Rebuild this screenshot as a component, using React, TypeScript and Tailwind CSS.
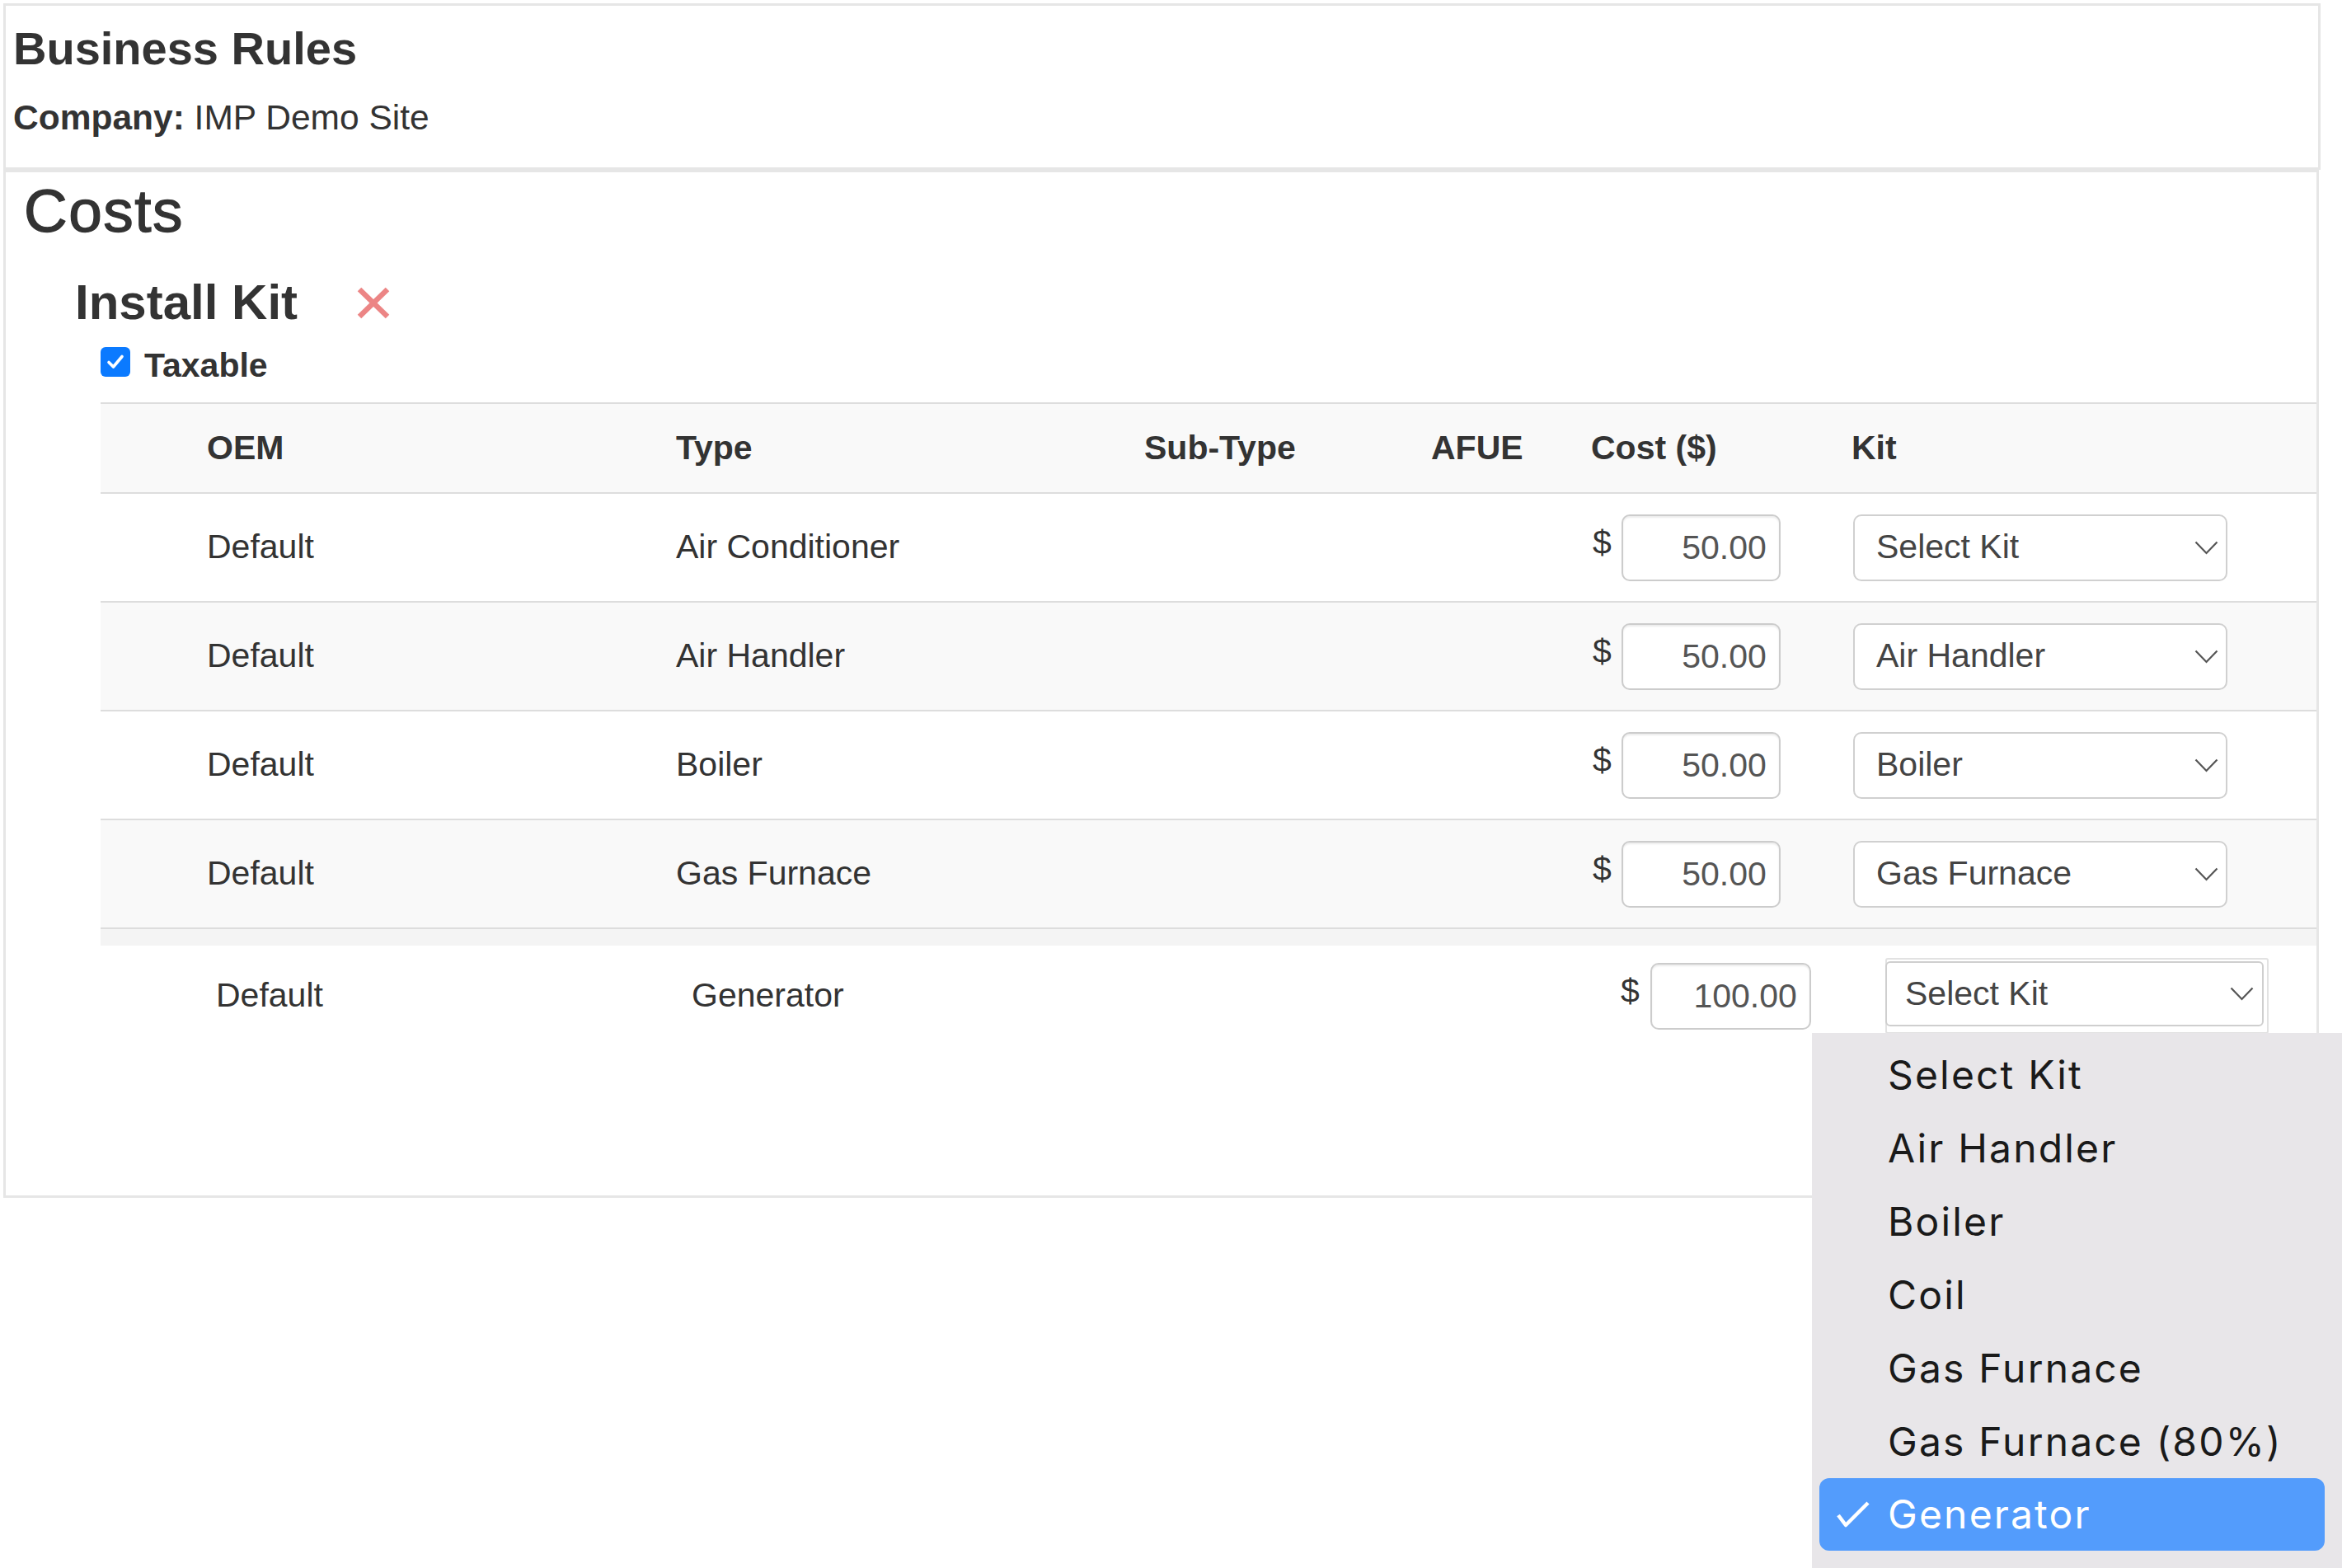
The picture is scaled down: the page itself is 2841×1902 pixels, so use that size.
const rows = [
  { oem: "Default", type: "Air Conditioner", cost: "50.00", kit: "Select Kit" },
  { oem: "Default", type: "Air Handler", cost: "50.00", kit: "Air Handler" },
  { oem: "Default", type: "Boiler", cost: "50.00", kit: "Boiler" },
  { oem: "Default", type: "Gas Furnace", cost: "50.00", kit: "Gas Furnace" },
];

const kitOptions = [
  "Select Kit",
  "Air Handler",
  "Boiler",
  "Coil",
  "Gas Furnace",
  "Gas Furnace (80%)",
  "Generator",
];

function Chevron() {
  return (
    <svg width="29" height="17" viewBox="0 0 29 17" fill="none">
      <polyline points="1.5,1.5 14.5,15 27.5,1.5" stroke="#555" strokeWidth="2.2" />
    </svg>
  );
}

function KitSelect({ value }: { value: string }) {
  return (
    <div className="ml-[2px] flex h-[81px] w-[454px] items-center justify-between rounded-[10px] border-2 border-[#d0d0d0] bg-white pl-[26px] pr-[9px] text-[#444]">
      <span>{value}</span>
      <Chevron />
    </div>
  );
}

function CostInput({ value, width }: { value: string; width: string }) {
  return (
    <input
      readOnly
      value={value}
      className={`${width} h-[81px] rounded-[10px] border-2 border-[#cccccc] bg-white pr-[15px] text-right text-[41px] text-[#555] shadow-[inset_0_2px_2px_rgba(0,0,0,0.075)] outline-none`}
    />
  );
}

const cols = "grid grid-cols-[129px_569px_568px_348px_194px_316px_1fr] items-center";

export default function App() {
  return (
    <div className="relative h-[1902px] w-[2841px] overflow-hidden bg-white pl-[4px] pt-[4px] font-['Liberation_Sans',Arial,Helvetica,sans-serif] text-[41px] text-[#333]">
      {/* Business rules header */}
      <div className="h-[202px] w-[2811px] border-[3px] border-[#e6e6e6] pl-[9px] pt-[19px]">
        <h3 className="h-[66px] text-[56px] font-bold leading-[66px]">Business Rules</h3>
        <p className="mt-[23px] h-[56px] text-[42.5px] leading-[56px]">
          <b>Company:</b> IMP Demo Site
        </p>
      </div>

      {/* Costs panel */}
      <div className="h-[1247px] w-[2809px] border-[3px] border-[#e6e6e6] pl-[22px] pt-[7px]">
        <h2 className="h-[80px] text-[73px] leading-[80px] tracking-[1.5px] [-webkit-text-stroke:1.3px_#333]">Costs</h2>

        <div className="ml-[62px] mt-[36px]">
          <div className="flex h-[70px] items-center">
            <h3 className="text-[60px] font-bold leading-[70px]">Install Kit</h3>
            <svg className="ml-[72px]" width="40" height="39" viewBox="0 0 40 39">
              <line x1="3" y1="3" x2="37" y2="36" stroke="#ec8585" strokeWidth="6.5" />
              <line x1="37" y1="3" x2="3" y2="36" stroke="#ec8585" strokeWidth="6.5" />
            </svg>
          </div>

          <div className="ml-[31px]">
            <div className="mt-[13px] flex h-[56px] items-start">
              <div className="mt-[6px] flex h-[36px] w-[36px] items-center justify-center rounded-[6px] bg-[#0b7aff]">
                <svg width="24" height="24" viewBox="0 0 24 24" fill="none">
                  <polyline points="4,12.5 9.5,18 20,5.5" stroke="white" strokeWidth="3.6" strokeLinecap="round" strokeLinejoin="round" />
                </svg>
              </div>
              <span className="ml-[17px] font-bold leading-[56px]">Taxable</span>
            </div>

            <div className="mt-[17px]">
              <div className={`${cols} h-[111px] border-y-2 border-[#dddddd] bg-[#f9f9f9] font-bold`}>
                <div />
                <div>OEM</div>
                <div>Type</div>
                <div>Sub-Type</div>
                <div>AFUE</div>
                <div>Cost ($)</div>
                <div>Kit</div>
              </div>

              {rows.map((r, i) => (
                <div
                  key={r.type}
                  className={`${cols} h-[132px] border-b-2 border-[#dddddd] ${i % 2 === 1 ? "bg-[#f9f9f9]" : "bg-white"}`}
                >
                  <div />
                  <div>{r.oem}</div>
                  <div>{r.type}</div>
                  <div />
                  <div />
                  <div className="flex items-center">
                    <span className="mb-[10px] ml-[2px]">$</span>
                    <span className="ml-[12px]">
                      <CostInput value={r.cost} width="w-[193px]" />
                    </span>
                  </div>
                  <div>
                    <KitSelect value={r.kit} />
                  </div>
                </div>
              ))}

              {/* drop placeholder + dragged row */}
              <div className="h-[20px] bg-[#f4f4f4]" />
              <div className="grid h-[122px] grid-cols-[140px_577px_1125px_323px_1fr] items-center bg-white">
                <div />
                <div>Default</div>
                <div>Generator</div>
                <div className="flex items-center">
                  <span className="mb-[10px] ml-[2px]">$</span>
                  <span className="ml-[13px]">
                    <CostInput value="100.00" width="w-[195px]" />
                  </span>
                </div>
                <div>
                  <div className="h-[92px] w-[465px] rounded-[3px] border-2 border-[#e2e2e2] pr-[4px] pt-[2px]">
                    <div className="-ml-[2px] flex h-[79px] w-[459px] items-center justify-between rounded-[6px] border-2 border-[#cfcfcf] bg-white pl-[22px] pr-[10px] text-[#444]">
                      <span>Select Kit</span>
                      <Chevron />
                    </div>
                  </div>
                </div>
              </div>
            </div>
          </div>
        </div>
      </div>

      {/* native select popup */}
      <div className="absolute left-[2198px] top-[1253px] h-[700px] w-[700px] bg-[#e8e6e9] pt-[6px] font-['Inter',sans-serif] text-[48px] tracking-[0.045em] text-[#1a1a1a]">
        {kitOptions.map((opt) =>
          opt === "Generator" ? (
            <div
              key={opt}
              className="mx-[9px] flex h-[88px] w-[613px] items-center rounded-[12px] bg-[#539cfc] leading-[88px] text-white"
            >
              <span className="flex w-[83px] pl-[20px]">
                <svg width="42" height="32" viewBox="0 0 42 32" fill="none">
                  <polyline points="3,17 12,29 39,2" stroke="white" strokeWidth="4.5" strokeLinejoin="round" />
                </svg>
              </span>
              <span>{opt}</span>
            </div>
          ) : (
            <div key={opt} className="h-[89px] pl-[92px] leading-[89px]">
              {opt}
            </div>
          )
        )}
      </div>
    </div>
  );
}
